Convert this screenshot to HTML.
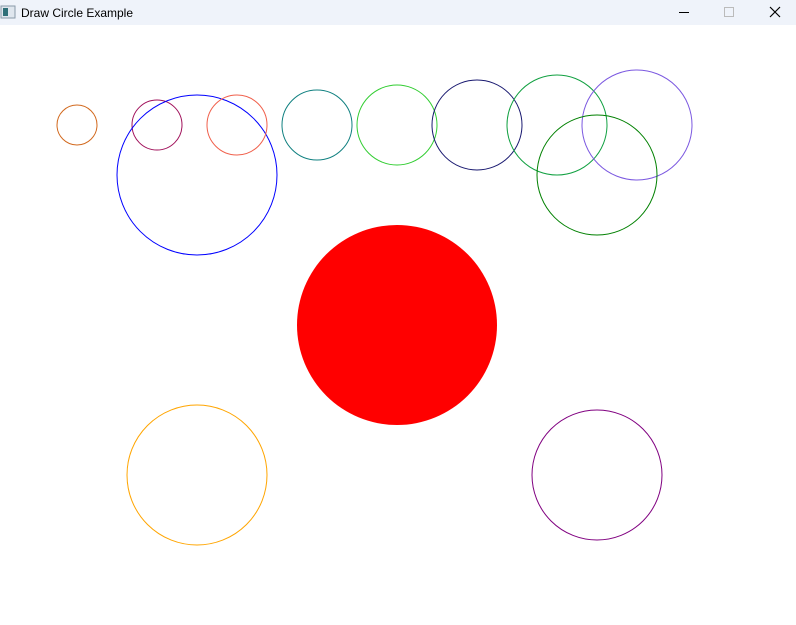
<!DOCTYPE html>
<html><head><style>
html,body{margin:0;padding:0;width:796px;height:625px;overflow:hidden;background:#fff;font-family:"Liberation Sans",sans-serif}
.tb{position:absolute;left:0;top:0;width:796px;height:25px;background:#eff3fa}
.tt{position:absolute;left:21px;top:6px;font-size:12px;color:#000}
</style></head><body>
<div class="tb">
<svg style="position:absolute;left:0;top:5px" width="16" height="14"><rect x="1" y="1" width="14" height="12" fill="#dfe6ee" stroke="#8a9aa8"/><rect x="3" y="3" width="5" height="8" fill="#2f6f78"/></svg>
<div class="tt">Draw Circle Example</div>
<svg style="position:absolute;left:670px;top:0" width="126" height="25">
<line x1="9" y1="12.5" x2="19" y2="12.5" stroke="#000"/>
<rect x="54.5" y="7.5" width="9" height="9" fill="none" stroke="#bbb"/>
<path d="M100 7 L110 17 M110 7 L100 17" stroke="#000" stroke-width="1.2"/>
</svg>
</div>
<svg style="position:absolute;left:0;top:0" width="796" height="625" fill="none" stroke-width="1">
<circle cx="397" cy="325" r="100" fill="#ff0000" stroke="none"/>
<circle cx="77" cy="125" r="20" stroke="#d2691e"/>
<circle cx="157" cy="125" r="25" stroke="#a0105a"/>
<circle cx="197" cy="175" r="80" stroke="#0000ff"/>
<circle cx="237" cy="125" r="30" stroke="#f0604c"/>
<circle cx="317" cy="125" r="35" stroke="#108080"/>
<circle cx="397" cy="125" r="40" stroke="#32cd32"/>
<circle cx="477" cy="125" r="45" stroke="#191970"/>
<circle cx="557" cy="125" r="50" stroke="#10a040"/>
<circle cx="637" cy="125" r="55" stroke="#7b58e0"/>
<circle cx="597" cy="175" r="60" stroke="#008000"/>
<circle cx="197" cy="475" r="70" stroke="#ffa500"/>
<circle cx="597" cy="475" r="65" stroke="#800080"/>
</svg>
</body></html>
